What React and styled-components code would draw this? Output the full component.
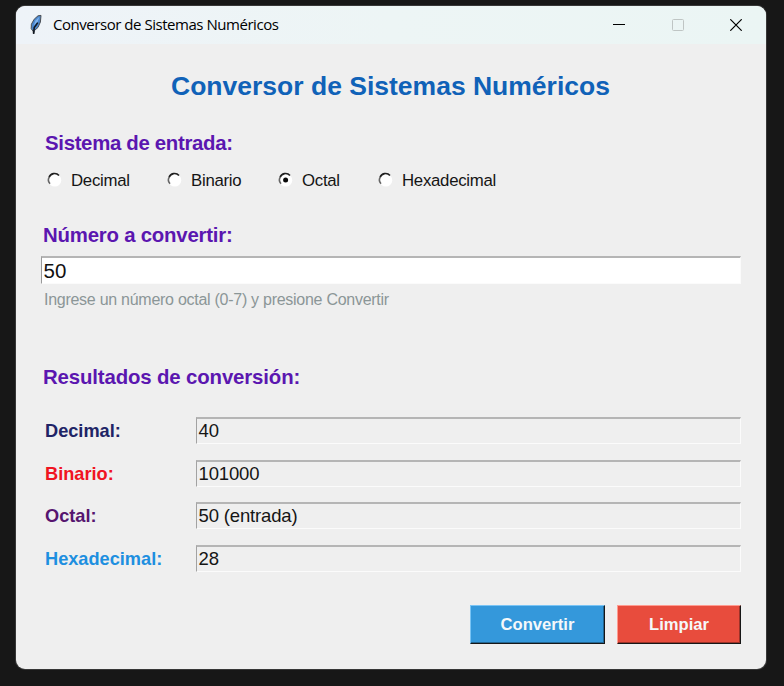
import React, { useState } from "react";
import styled, { createGlobalStyle } from "styled-components";

const GlobalStyle = createGlobalStyle`
  * { box-sizing: border-box; }
  body { margin: 0; background: #171717; overflow: hidden; }
`;

const Desktop = styled.div`
  width: 784px;
  height: 686px;
  padding: 6px 18px 17px 16px;
  background: #171717;
  font-family: "Liberation Sans", Arial, sans-serif;
`;

const Window = styled.main`
  width: 750px;
  height: 663px;
  border-radius: 9px;
  overflow: hidden;
  background: #efefef;
  box-shadow: 0 0 0 1px #373737;
`;

const TitleBar = styled.header`
  height: 38px;
  display: flex;
  align-items: center;
  padding-left: 13px;
  background: linear-gradient(90deg, #eef3f8, #edf5f5 50%, #ebf5f4);
`;

const WindowTitle = styled.span`
  flex: 1;
  margin: -2px 0 0 10px;
  font: 15px/20px "Open Sans", "Noto Sans", sans-serif;
  letter-spacing: -0.46px;
  color: #000;
  white-space: nowrap;
`;

const Controls = styled.div`
  display: flex;
  gap: 46.5px;
  padding-right: 24px;
`;

const Content = styled.form`
  padding: 0 25px;
`;

const Heading = styled.h1`
  margin: 26px 0 0;
  height: 32px;
  font-size: 26.5px;
  line-height: 32px;
  text-align: center;
  text-indent: -1px;
  color: #1062b8;
  white-space: nowrap;
`;

const SectionTitle = styled.h2`
  margin: ${(p) => p.$top}px 0 0 ${(p) => p.$indent || 2}px;
  height: 24px;
  font-size: 20.4px;
  line-height: 24px;
  letter-spacing: ${(p) => p.$spacing || 0}px;
  color: #5b16b0;
  white-space: nowrap;
`;

const RadioGroup = styled.div`
  display: grid;
  grid-template-columns: 120px 111px 100px auto;
  justify-content: start;
  margin: 14px 0 0 6px;
`;

const Radio = styled.label`
  display: flex;
  align-items: center;
  height: 22px;
  gap: 8px;
  font-size: 16.8px;
  letter-spacing: -0.27px;
  line-height: 22px;
  color: #151515;
`;

const RadioText = styled.span`
  padding-top: 2px;
`;

const Entry = styled.input`
  display: block;
  width: 700px;
  height: 28px;
  margin-top: 9px;
  padding: 0 0 0 1.5px;
  border: solid;
  border-width: 2px 1px 1px 1px;
  border-color: #b5b5b5 #fbfbfb #fbfbfb #999;
  border-radius: 0;
  outline: 0;
  background: #fff;
  color: #111;
  font: 20.5px/24px "Liberation Sans", Arial, sans-serif;
`;

const Hint = styled.p`
  margin: 6px 0 0 3px;
  height: 20px;
  font-size: 16px;
  letter-spacing: -0.27px;
  line-height: 20px;
  color: #8b9697;
  white-space: nowrap;
`;

const Results = styled.div`
  display: grid;
  grid-template-columns: 151px 545px;
  grid-auto-rows: 27px;
  row-gap: 15.5px;
  margin: 28px 0 0 4px;
`;

const ResultLabel = styled.span`
  font-size: 18.2px;
  font-weight: 700;
  line-height: 29px;
  color: ${(p) => p.$color};
`;

const ResultValue = styled.output`
  padding-left: 1.5px;
  border: solid;
  border-width: 2px 1px 1px 1px;
  border-color: #b5b5b5 #fbfbfb #fbfbfb #a2a2a2;
  font-size: 18.5px;
  letter-spacing: -0.15px;
  line-height: 23.5px;
  color: #151515;
`;

const Actions = styled.div`
  display: flex;
  justify-content: flex-end;
  gap: 12px;
  margin-top: 33px;
`;

const Button = styled.button`
  width: ${(p) => p.$width}px;
  height: 39px;
  padding: 2px 0 0;
  border: solid;
  border-width: 1px;
  border-color: ${(p) => p.$light} #171717 #171717 ${(p) => p.$light};
  box-shadow: inset -1px -1px ${(p) => p.$dark};
  background: ${(p) => p.$color};
  color: #f5f8fa;
  font: bold 16.6px/20px "Liberation Sans", Arial, sans-serif;
`;

const FeatherIcon = () => (
  <svg width="14" height="22" viewBox="0 0 14 22">
    <path d="M12 1.4 9 1.8 5.2 5.2 2.4 10.2 2.2 14.6l1.8 2.6.6 2.6.8-3.2 3.6-3.2 2.4-5.4z" fill="#4a86cc" stroke="#4b4f54" strokeWidth="1" />
    <path d="M10.4 2.8 6.6 6.4 4.6 11.4 8.6 8z" fill="#7fb4ee" />
    <path d="M8.8 8.6 5.2 13.6l-.6 6.2" fill="none" stroke="#121820" strokeWidth="1.6" />
  </svg>
);

const MinimizeIcon = () => (
  <svg width="12" height="12" shapeRendering="crispEdges"><path d="M0 5.5h12" stroke="#000" /></svg>
);

const MaximizeIcon = () => (
  <svg width="12" height="12"><rect x=".5" y=".5" width="11" height="11" rx="1" fill="none" stroke="#bfc5c4" /></svg>
);

const CloseIcon = () => (
  <svg width="12" height="12"><path d="m.3.3 11.4 11.4m0-11.4L.3 11.7" stroke="#000" strokeWidth="1.2" /></svg>
);

const HiddenRadio = styled.input`
  appearance: none;
  width: 0;
  height: 0;
  margin: 0 -8px 0 0;
`;

const RadioMark = ({ checked }) => (
  <svg width="16" height="16" viewBox="0 0 16 16">
    <circle cx="7.8" cy="8.2" r="6.4" fill="#fff" />
    <path d="M3 11.8A5.5 5.5 0 0 1 2 5.6" fill="none" stroke="#666" strokeWidth="1.6" />
    <path d="M2 5.6A5.8 5.8 0 0 1 12 3.6" fill="none" stroke="#202020" strokeWidth="1.6" />
    {checked && <circle cx="7.6" cy="7.9" r="2.5" fill="#090909" />}
  </svg>
);

const systems = ["Decimal", "Binario", "Octal", "Hexadecimal"];
const results = [
  { label: "Decimal:", value: "40", color: "#202466" },
  { label: "Binario:", value: "101000", color: "#f01422" },
  { label: "Octal:", value: "50 (entrada)", color: "#56156f" },
  { label: "Hexadecimal:", value: "28", color: "#1e8fe0" },
];

export default function App() {
  const [system, setSystem] = useState("Octal");
  return (
    <>
      <GlobalStyle />
      <Desktop>
        <Window>
          <TitleBar>
            <FeatherIcon />
            <WindowTitle>Conversor de Sistemas Numéricos</WindowTitle>
            <Controls><MinimizeIcon /><MaximizeIcon /><CloseIcon /></Controls>
          </TitleBar>
          <Content onSubmit={(e) => e.preventDefault()}>
            <Heading>Conversor de Sistemas Numéricos</Heading>
            <SectionTitle $top={29} $indent={4} $spacing={-0.32}>Sistema de entrada:</SectionTitle>
            <RadioGroup>
              {systems.map((name) => (
                <Radio key={name}>
                  <HiddenRadio type="radio" name="system" checked={system === name} onChange={() => setSystem(name)} />
                  <RadioMark checked={system === name} />
                  <RadioText>{name}</RadioText>
                </Radio>
              ))}
            </RadioGroup>
            <SectionTitle $top={32} $spacing={-0.22}>Número a convertir:</SectionTitle>
            <Entry defaultValue="50" />
            <Hint>Ingrese un número octal (0-7) y presione Convertir</Hint>
            <SectionTitle $top={55} $spacing={-0.14}>Resultados de conversión:</SectionTitle>
            <Results>
              {results.map((r) => (
                <React.Fragment key={r.label}>
                  <ResultLabel $color={r.color}>{r.label}</ResultLabel>
                  <ResultValue>{r.value}</ResultValue>
                </React.Fragment>
              ))}
            </Results>
            <Actions>
              <Button type="submit" $width={135} $color="#3498db" $light="#79c4f5" $dark="#236692">Convertir</Button>
              <Button type="reset" $width={124} $color="#e84c3d" $light="#ff9b90" $dark="#9b3329">Limpiar</Button>
            </Actions>
          </Content>
        </Window>
      </Desktop>
    </>
  );
}
